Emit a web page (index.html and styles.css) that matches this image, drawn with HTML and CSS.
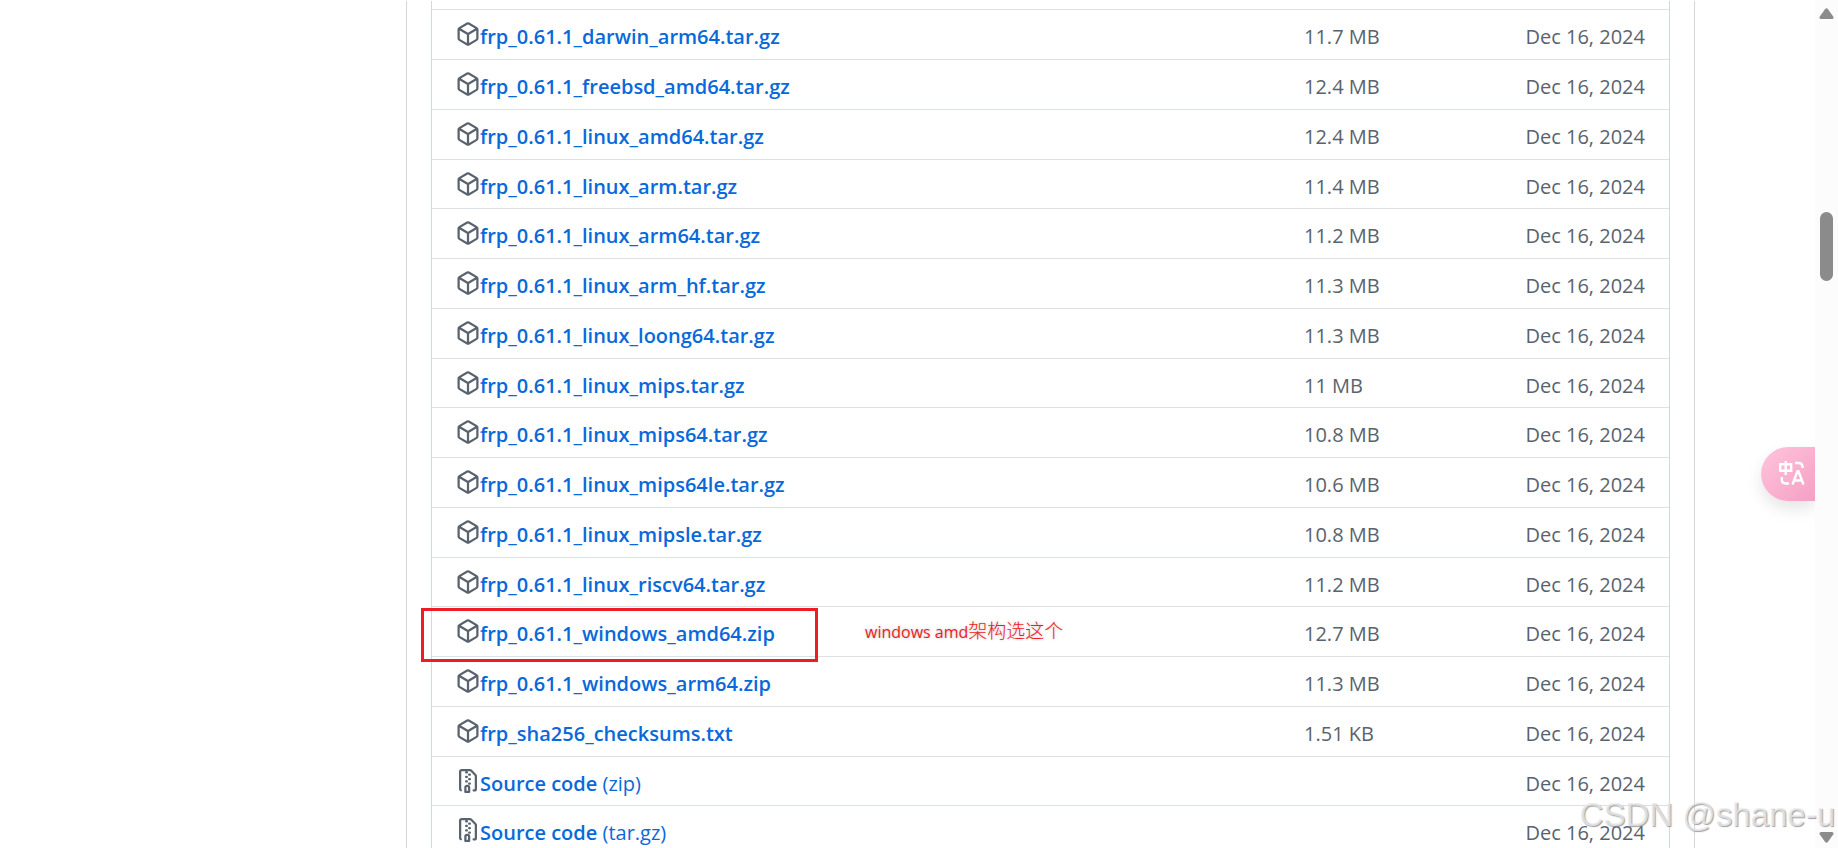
FILE: index.html
```
<!DOCTYPE html>
<html lang="en">
<head>
<meta charset="utf-8">
<title>frp release assets</title>
<link rel="stylesheet" href="styles.css">
</head>
<body>
<svg class="sprite" aria-hidden="true">
  <symbol id="package" viewBox="0 0 16 16"><path d="m8.878.392 5.25 3.045c.54.314.872.89.872 1.514v6.098a1.75 1.75 0 0 1-.872 1.514l-5.25 3.045a1.75 1.75 0 0 1-1.756 0l-5.25-3.045A1.75 1.75 0 0 1 1 11.049V4.951c0-.624.332-1.201.872-1.514L7.122.392a1.75 1.75 0 0 1 1.756 0ZM7.875 1.69l-4.63 2.685L8 7.133l4.755-2.758-4.63-2.685a.248.248 0 0 0-.25 0ZM2.5 5.677v5.372c0 .09.047.171.125.216l4.625 2.683V8.432Zm6.25 8.271 4.625-2.683a.25.25 0 0 0 .125-.216V5.677L8.75 8.432Z"/></symbol>
  <symbol id="file-zip" viewBox="0 0 16 16"><path d="M3.5 1.75v11.5c0 .09.048.173.126.217a.75.75 0 0 1-.752 1.298A1.748 1.748 0 0 1 2 13.25V1.75C2 .784 2.784 0 3.75 0h5.586c.464 0 .909.185 1.237.513l2.914 2.914c.329.328.513.773.513 1.237v8.586A1.75 1.75 0 0 1 12.25 15h-.5a.75.75 0 0 1 0-1.5h.5a.25.25 0 0 0 .25-.25V4.664a.25.25 0 0 0-.073-.177L9.513 1.573a.25.25 0 0 0-.177-.073H7.25a.75.75 0 0 1 0 1.5h-.5a.75.75 0 0 1 0-1.5h-3a.25.25 0 0 0-.25.25Zm3.75 8.75h.5c.966 0 1.75.784 1.75 1.75v3a.75.75 0 0 1-.75.75h-2.5a.75.75 0 0 1-.75-.75v-3c0-.966.784-1.75 1.75-1.75ZM6 5.25a.75.75 0 0 1 .75-.75h.5a.75.75 0 0 1 0 1.5h-.5A.75.75 0 0 1 6 5.25Zm.75 2.25h.5a.75.75 0 0 1 0 1.5h-.5a.75.75 0 0 1 0-1.5ZM8 6.75A.75.75 0 0 1 8.75 6h.5a.75.75 0 0 1 0 1.5h-.5A.75.75 0 0 1 8 6.75ZM8.75 3h.5a.75.75 0 0 1 0 1.5h-.5a.75.75 0 0 1 0-1.5ZM8 9.75A.75.75 0 0 1 8.75 9h.5a.75.75 0 0 1 0 1.5h-.5A.75.75 0 0 1 8 9.75Zm-1 2.5v2.25h1v-2.25a.25.25 0 0 0-.25-.25h-.5a.25.25 0 0 0-.25.25Z"/></symbol>
</svg>
<div class="page">
  <main class="release">
    <div class="assets">
      <table class="asset-table">
        <colgroup><col><col class="col-size"><col class="col-date"></colgroup>
        <tbody>
          <tr><td><a class="asset" href="#"><svg class="icon"><use href="#package"/></svg><b>frp_0.61.1_darwin_arm64.tar.gz</b></a></td><td>11.7 MB</td><td class="date">Dec 16, 2024</td></tr>
          <tr><td><a class="asset" href="#"><svg class="icon"><use href="#package"/></svg><b>frp_0.61.1_freebsd_amd64.tar.gz</b></a></td><td>12.4 MB</td><td class="date">Dec 16, 2024</td></tr>
          <tr><td><a class="asset" href="#"><svg class="icon"><use href="#package"/></svg><b>frp_0.61.1_linux_amd64.tar.gz</b></a></td><td>12.4 MB</td><td class="date">Dec 16, 2024</td></tr>
          <tr><td><a class="asset" href="#"><svg class="icon"><use href="#package"/></svg><b>frp_0.61.1_linux_arm.tar.gz</b></a></td><td>11.4 MB</td><td class="date">Dec 16, 2024</td></tr>
          <tr><td><a class="asset" href="#"><svg class="icon"><use href="#package"/></svg><b>frp_0.61.1_linux_arm64.tar.gz</b></a></td><td>11.2 MB</td><td class="date">Dec 16, 2024</td></tr>
          <tr><td><a class="asset" href="#"><svg class="icon"><use href="#package"/></svg><b>frp_0.61.1_linux_arm_hf.tar.gz</b></a></td><td>11.3 MB</td><td class="date">Dec 16, 2024</td></tr>
          <tr><td><a class="asset" href="#"><svg class="icon"><use href="#package"/></svg><b>frp_0.61.1_linux_loong64.tar.gz</b></a></td><td>11.3 MB</td><td class="date">Dec 16, 2024</td></tr>
          <tr><td><a class="asset" href="#"><svg class="icon"><use href="#package"/></svg><b>frp_0.61.1_linux_mips.tar.gz</b></a></td><td>11 MB</td><td class="date">Dec 16, 2024</td></tr>
          <tr><td><a class="asset" href="#"><svg class="icon"><use href="#package"/></svg><b>frp_0.61.1_linux_mips64.tar.gz</b></a></td><td>10.8 MB</td><td class="date">Dec 16, 2024</td></tr>
          <tr><td><a class="asset" href="#"><svg class="icon"><use href="#package"/></svg><b>frp_0.61.1_linux_mips64le.tar.gz</b></a></td><td>10.6 MB</td><td class="date">Dec 16, 2024</td></tr>
          <tr><td><a class="asset" href="#"><svg class="icon"><use href="#package"/></svg><b>frp_0.61.1_linux_mipsle.tar.gz</b></a></td><td>10.8 MB</td><td class="date">Dec 16, 2024</td></tr>
          <tr><td><a class="asset" href="#"><svg class="icon"><use href="#package"/></svg><b>frp_0.61.1_linux_riscv64.tar.gz</b></a></td><td>11.2 MB</td><td class="date">Dec 16, 2024</td></tr>
          <tr><td class="marked"><a class="asset" href="#"><svg class="icon"><use href="#package"/></svg><b>frp_0.61.1_windows_amd64.zip</b></a><span class="mark-box"></span><span class="mark-note" lang="zh"><span class="latin">windows amd</span>架构选这个</span></td><td>12.7 MB</td><td class="date">Dec 16, 2024</td></tr>
          <tr><td><a class="asset" href="#"><svg class="icon"><use href="#package"/></svg><b>frp_0.61.1_windows_arm64.zip</b></a></td><td>11.3 MB</td><td class="date">Dec 16, 2024</td></tr>
          <tr><td><a class="asset" href="#"><svg class="icon"><use href="#package"/></svg><b>frp_sha256_checksums.txt</b></a></td><td>1.51 KB</td><td class="date">Dec 16, 2024</td></tr>
          <tr><td><a class="asset" href="#"><svg class="icon"><use href="#file-zip"/></svg><b>Source code</b>&nbsp;<span>(zip)</span></a></td><td></td><td class="date">Dec 16, 2024</td></tr>
          <tr><td><a class="asset" href="#"><svg class="icon"><use href="#file-zip"/></svg><b>Source code</b>&nbsp;<span>(tar.gz)</span></a></td><td></td><td class="date">Dec 16, 2024</td></tr>
        </tbody>
      </table>
    </div>
  </main>
  <div class="scrollbar" aria-hidden="true">
    <svg class="arrow" viewBox="0 0 15 11"><path d="M6 1.2Q7.500-.6 9 1.200L14.200 8.500Q15.200 10.700 13 11H2Q-.200 10.700.800 8.500Z"/></svg>
    <span class="thumb"></span>
    <svg class="arrow arrow-down" viewBox="0 0 15 11"><path d="M6 9.800Q7.500 11.600 9 9.800L14.200 2.500Q15.200.300 13 0H2Q-.200.300.800 2.500Z"/></svg>
  </div>
</div>
<button class="translate" type="button" aria-label="Translate">
  <svg viewBox="0 0 26 26" fill="none" stroke="#fff" stroke-width="2.400"><path d="M1.200 4.200h11v6.600h-11zM6.700 1v14M16 3h3.500q4 0 4 4v1M2.800 17v2.500q0 4 4 4H10"/><path d="m13.500 24.500 5-13.200h1l5 13.200M15.200 20.500h7.600"/></svg>
</button>
<div class="watermark">CSDN @shane-u</div>
</body>
</html>
```
FILE: styles.css
```
* { box-sizing: border-box; }

body {
  margin: 0;
  height: 100vh;
  overflow: hidden;
  background: #fff;
  color: #59636e;
  font: 20px/30px "Open Sans", "Noto Sans", sans-serif;
}

.sprite { position: absolute; width: 0; height: 0; }

.page {
  display: grid;
  grid-template-columns: 406px minmax(0, 1fr) 120px 23px;
  height: 100vh;
  overflow: hidden;
}

.release {
  grid-column: 2;
  min-height: 0;
  margin-top: 1px;
  padding: 0 24px;
  border: solid #d1d9e0;
  border-width: 0 1px;
}

.assets {
  height: 100%;
  padding-top: 8px;
  border: solid #d1d9e0;
  border-width: 0 1px;
}

.asset-table {
  width: 100%;
  table-layout: fixed;
  border-spacing: 0;
}

.col-size { width: 191px; }
.col-date { width: 174px; }

td {
  height: 50px;
  padding: 5px 0 0;
  border-top: 1px solid #dce1e6;
  white-space: nowrap;
}

tr:nth-child(4n) td { height: 49px; }

td.date { padding-right: 24px; text-align: right; }

.asset {
  display: flex;
  align-items: center;
  padding-left: 24px;
  color: #0969da;
  text-decoration: none;
}

.asset b { font-weight: 600; }

.icon {
  width: 24px;
  height: 24px;
  margin-bottom: 6px;
  flex: none;
  fill: #59636e;
}

.marked { position: relative; }

.mark-box {
  position: absolute;
  top: 1px;
  left: -11px;
  width: 397px;
  height: 54px;
  border: 3px solid #ee1c24;
}

.mark-note {
  position: absolute;
  top: 8px;
  left: 433px;
  color: #ee1c24;
  font: 300 19px/30px "Noto Sans CJK SC", sans-serif;
  text-shadow: 0 0 3px #bbb;
}

.latin { font: 16px/30px "Open Sans", sans-serif; }

.scrollbar {
  grid-column: 4;
  display: flex;
  flex-direction: column;
  align-items: center;
  padding: 8px 0 5px;
  background: #fcfcfc;
}

.arrow { width: 15px; height: 11px; fill: #8b8b8b; }
.arrow-down { margin-top: auto; }

.thumb {
  width: 13px;
  height: 69px;
  margin-top: 193px;
  border-radius: 7px;
  background: #8b8b8b;
}

.translate {
  position: absolute;
  top: 447px;
  right: 23px;
  width: 54px;
  height: 54px;
  padding: 0 0 2px 18px;
  border: 0;
  border-radius: 27px 0 0 27px;
  background: linear-gradient(135deg, #ffc4dc, #f4a0c4);
  box-shadow: 0 8px 16px #0000001a;
  clip-path: inset(-30px 0 -30px -30px);
}

.translate svg { display: block; width: 26px; height: 26px; }

.watermark {
  position: absolute;
  right: 3px;
  bottom: 13px;
  color: #ececeecc;
  font: 33px/40px "Liberation Sans", Arial, sans-serif;
  text-shadow: 1px 1px 1px #888888cc;
}
```
